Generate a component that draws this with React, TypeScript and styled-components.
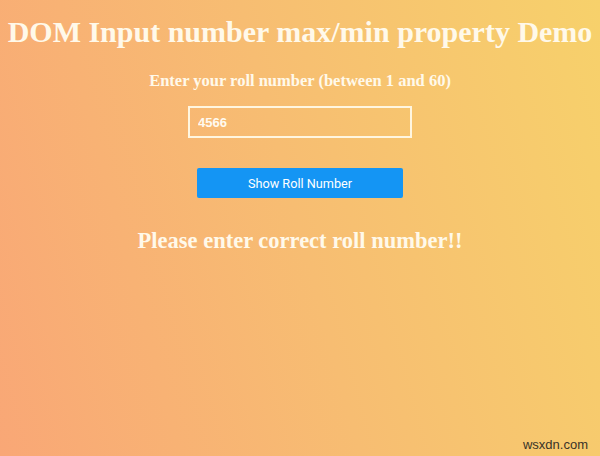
import React from "react";
import styled, { createGlobalStyle } from "styled-components";

const GlobalStyle = createGlobalStyle`
  html, body {
    margin: 0;
    padding: 0;
    height: 100%;
  }
  #root {
    height: 100%;
  }
`;

const Page = styled.div`
  width: 600px;
  height: 456px;
  box-sizing: border-box;
  position: relative;
  overflow: hidden;
  background: linear-gradient(75deg, #f9a776 0%, #f7bd72 50%, #f7d16b 100%);
  font-family: "Liberation Serif", "Times New Roman", serif;
  color: #fff9ea;
  display: flex;
  flex-direction: column;
  align-items: center;
  padding-top: 14px;
`;

const Title = styled.h1`
  margin: 0;
  font-size: 30px;
  font-weight: bold;
  line-height: 35px;
  white-space: nowrap;
`;

const Label = styled.h4`
  margin: 22px 0 0;
  font-size: 16.5px;
  font-weight: bold;
  line-height: 20px;
`;

const NumberInput = styled.input`
  margin-top: 15px;
  width: 224px;
  height: 32px;
  box-sizing: border-box;
  background: transparent;
  border: 2px solid #fff6e0;
  padding: 0 8px;
  color: #fffaf0;
  font-family: "Liberation Sans", Arial, sans-serif;
  font-size: 13px;
  font-weight: bold;
  outline: none;
`;

const ShowButton = styled.button`
  margin-top: 30px;
  width: 206px;
  height: 30px;
  border: none;
  border-radius: 2px;
  background: #1495f4;
  color: #ffffff;
  font-family: Roboto, "Liberation Sans", Arial, sans-serif;
  font-size: 12.7px;
  cursor: pointer;
`;

const Message = styled.h2`
  margin: 30px 0 0;
  font-size: 22.5px;
  font-weight: bold;
  line-height: 26px;
`;

const Watermark = styled.span`
  position: absolute;
  right: 12px;
  bottom: 4px;
  font-family: "Liberation Sans", Arial, sans-serif;
  font-size: 13px;
  color: #3a3328;
`;

export default function App() {
  return (
    <>
      <GlobalStyle />
      <Page>
        <Title>DOM Input number max/min property Demo</Title>
        <Label>Enter your roll number (between 1 and 60)</Label>
        <NumberInput type="number" min={1} max={60} defaultValue={4566} />
        <ShowButton>Show Roll Number</ShowButton>
        <Message>Please enter correct roll number!!</Message>
        <Watermark>wsxdn.com</Watermark>
      </Page>
    </>
  );
}
